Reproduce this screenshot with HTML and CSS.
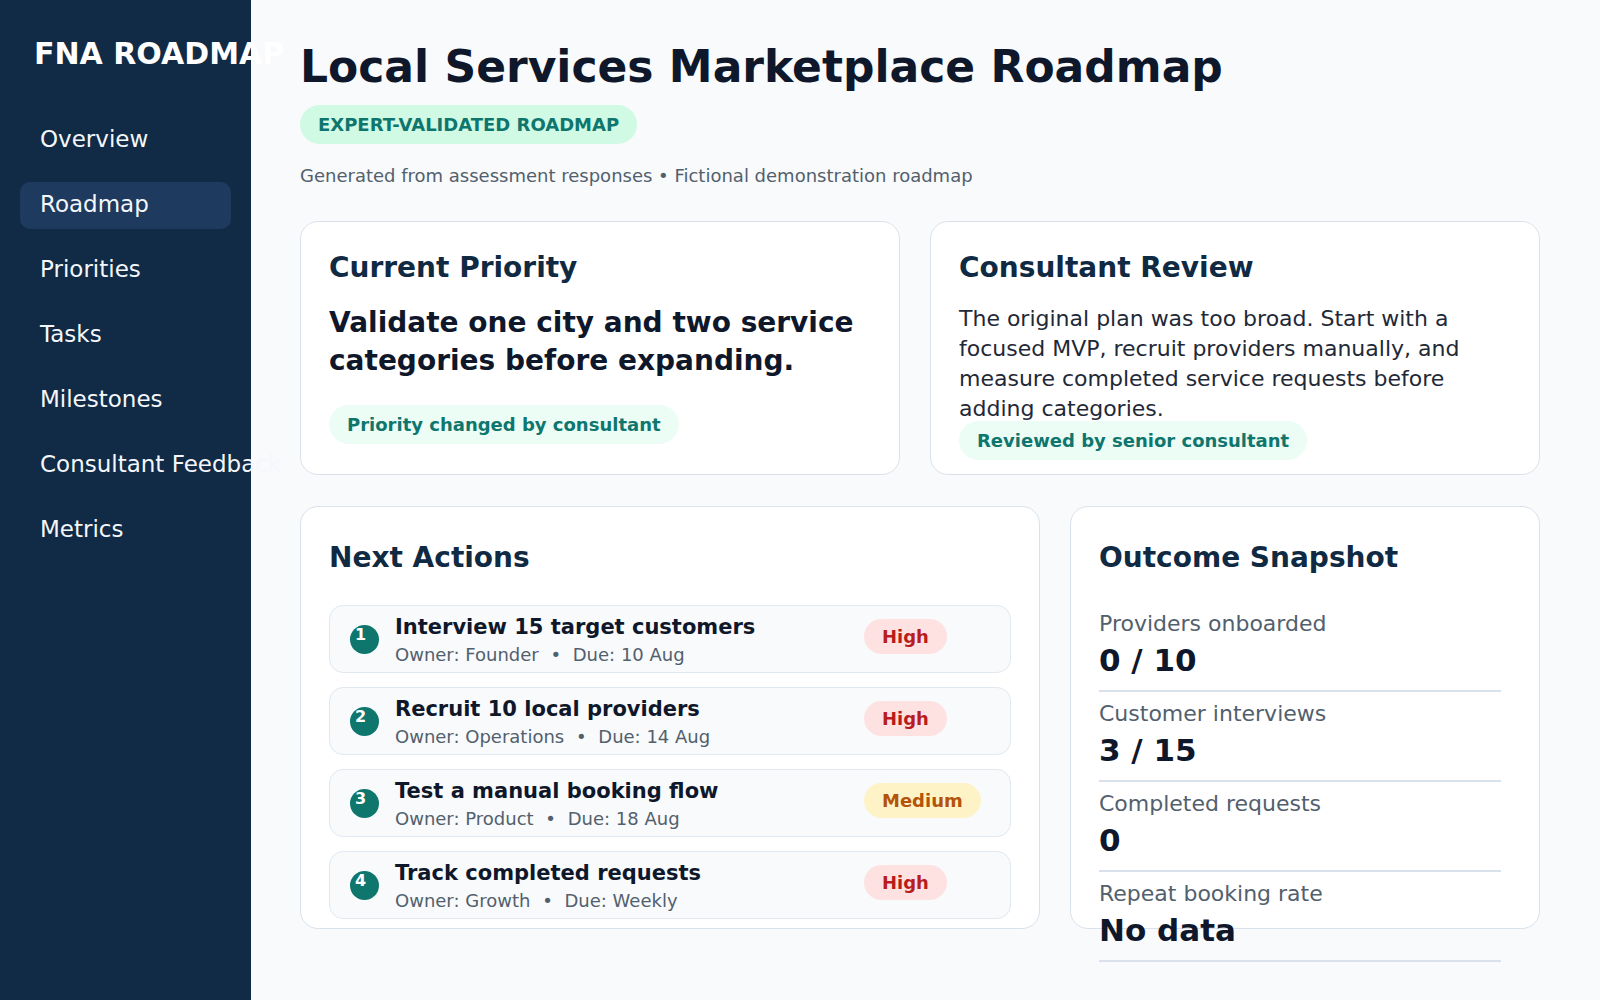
FILE: index.html
```html
<!DOCTYPE html>
<html lang="en">
<head>
    <meta charset="UTF-8">
    <meta name="viewport" content="width=device-width, initial-scale=1.0">
    <title>Roadmap - FNA</title>
    <link rel="stylesheet" href="styles.css">
</head>
<body>
    <!-- Sidebar -->
    <aside class="sidebar">
        <div class="logo">FNA ROADMAP</div>
        <nav class="nav">
            <a href="#overview">Overview</a>
            <a href="#roadmap" class="active">Roadmap</a>
            <a href="#priorities">Priorities</a>
            <a href="#tasks">Tasks</a>
            <a href="#milestones">Milestones</a>
            <a href="#feedback">Consultant Feedback</a>
            <a href="#metrics">Metrics</a>
        </nav>
    </aside>

    <main class="main">
        <!-- Page header -->
        <header class="page-header">
            <h1>Local Services Marketplace Roadmap</h1>
            <span class="status-badge">EXPERT-VALIDATED ROADMAP</span>
            <p class="subtitle">Generated from assessment responses • Fictional demonstration roadmap</p>
        </header>

        <!-- Priority + review -->
        <section class="grid grid-top">
            <div class="card">
                <h2>Current Priority</h2>
                <p class="priority-text">Validate one city and two service categories before expanding.</p>
                <span class="note-pill">Priority changed by consultant</span>
            </div>
            <div class="card">
                <h2>Consultant Review</h2>
                <p class="review-text">The original plan was too broad. Start with a focused MVP, recruit providers manually, and measure completed service requests before adding categories.</p>
                <span class="note-pill">Reviewed by senior consultant</span>
            </div>
        </section>

        <!-- Actions + outcomes -->
        <section class="grid grid-bottom">
            <div class="card card-tall">
                <h2>Next Actions</h2>
                <ul class="action-list">
                    <li class="action-row">
                        <span class="step">1</span>
                        <div class="action-info">
                            <div class="action-title">Interview 15 target customers</div>
                            <div class="action-meta">Owner: Founder <span class="dot">•</span> Due: 10 Aug</div>
                        </div>
                        <span class="priority priority-high">High</span>
                    </li>
                    <li class="action-row">
                        <span class="step">2</span>
                        <div class="action-info">
                            <div class="action-title">Recruit 10 local providers</div>
                            <div class="action-meta">Owner: Operations <span class="dot">•</span> Due: 14 Aug</div>
                        </div>
                        <span class="priority priority-high">High</span>
                    </li>
                    <li class="action-row">
                        <span class="step">3</span>
                        <div class="action-info">
                            <div class="action-title">Test a manual booking flow</div>
                            <div class="action-meta">Owner: Product <span class="dot">•</span> Due: 18 Aug</div>
                        </div>
                        <span class="priority priority-medium">Medium</span>
                    </li>
                    <li class="action-row">
                        <span class="step">4</span>
                        <div class="action-info">
                            <div class="action-title">Track completed requests</div>
                            <div class="action-meta">Owner: Growth <span class="dot">•</span> Due: Weekly</div>
                        </div>
                        <span class="priority priority-high">High</span>
                    </li>
                </ul>
            </div>

            <div class="card card-tall">
                <h2>Outcome Snapshot</h2>
                <ul class="metric-list">
                    <li class="metric">
                        <div class="metric-label">Providers onboarded</div>
                        <div class="metric-value">0 / 10</div>
                    </li>
                    <li class="metric">
                        <div class="metric-label">Customer interviews</div>
                        <div class="metric-value">3 / 15</div>
                    </li>
                    <li class="metric">
                        <div class="metric-label">Completed requests</div>
                        <div class="metric-value">0</div>
                    </li>
                    <li class="metric">
                        <div class="metric-label">Repeat booking rate</div>
                        <div class="metric-value">No data</div>
                    </li>
                </ul>
            </div>
        </section>
    </main>
</body>
</html>
```

FILE: styles.css
```css
/* General Styles */
body {
    margin: 0;
    display: flex;
    min-height: 100vh;
    background-color: #f8fafc;
    font-family: "DejaVu Sans", Verdana, sans-serif;
    color: #0f172a;
}

/* Sidebar */
.sidebar {
    width: 251px;
    flex-shrink: 0;
    box-sizing: border-box;
    padding: 36px 20px;
    background-color: #112a45;
    color: #ffffff;
}

.logo {
    padding-left: 14px;
    margin-bottom: 46px;
    font-size: 30px;
    font-weight: bold;
    white-space: nowrap;
}

.nav a {
    display: block;
    width: 211px;
    box-sizing: border-box;
    padding: 9px 20px 11px;
    margin-bottom: 18px;
    border-radius: 10px;
    color: #f4f7fb;
    text-decoration: none;
    font-size: 23px;
    line-height: 27px;
    white-space: nowrap;
}

.nav a.active {
    background-color: #1f3a5f;
}

/* Main */
.main {
    flex: 1;
    min-width: 0;
    padding: 41px 60px 0 49px;
}

.page-header {
    display: flex;
    flex-direction: column;
    align-items: flex-start;
}

.page-header h1 {
    margin: 0 0 13px;
    font-size: 44px;
    color: #0f172a;
}

.status-badge {
    padding: 9px 18px;
    border-radius: 999px;
    background-color: #d1fae5;
    color: #0f766e;
    font-size: 18px;
    font-weight: bold;
    line-height: 21px;
}

.subtitle {
    margin: 21px 0 35px;
    font-size: 18px;
    color: #52606d;
}

/* Card grids */
.grid {
    display: grid;
    column-gap: 30px;
}

.grid-top {
    grid-template-columns: 600px 610px;
    grid-auto-rows: 254px;
    margin-bottom: 31px;
}

.grid-bottom {
    grid-template-columns: 740px 470px;
    grid-auto-rows: 423px;
}

.card {
    display: flex;
    flex-direction: column;
    box-sizing: border-box;
    padding: 28px 28px 30px;
    background-color: #ffffff;
    border: 1px solid #d9e2ec;
    border-radius: 18px;
}

.card-tall {
    padding-top: 33px;
}

.card h2 {
    margin: 0;
    font-size: 28px;
    line-height: 1.3;
    color: #102a43;
}

.priority-text {
    margin: 18px 0 0;
    font-size: 28px;
    font-weight: bold;
    line-height: 38px;
    color: #0f172a;
}

.review-text {
    margin: 18px 0 -3px;
    font-size: 22px;
    line-height: 30px;
    color: #1f2937;
}

.note-pill {
    margin-top: auto;
    align-self: flex-start;
    padding: 9px 18px;
    border-radius: 999px;
    background-color: #ecfdf5;
    color: #0f766e;
    font-size: 18px;
    font-weight: bold;
    line-height: 21px;
}

/* Next actions */
.action-list {
    list-style: none;
    margin: 29px 0 0;
    padding: 0;
    display: flex;
    flex-direction: column;
    gap: 14px;
}

.action-row {
    display: grid;
    grid-template-columns: 29px 1fr 126px;
    column-gap: 16px;
    align-items: center;
    height: 68px;
    box-sizing: border-box;
    padding: 0 19px 0 20px;
    background-color: #f8fafc;
    border: 1px solid #e2e8f0;
    border-radius: 14px;
}

.step {
    width: 29px;
    height: 29px;
    box-sizing: border-box;
    padding-left: 5px;
    border-radius: 50%;
    background-color: #0f766e;
    color: #ffffff;
    font-size: 16px;
    font-weight: bold;
}

.action-info {
    padding-top: 2px;
}

.action-title {
    font-size: 21px;
    font-weight: bold;
    color: #0f172a;
}

.action-meta {
    margin-top: 5px;
    font-size: 18px;
    color: #52606d;
}

.action-meta .dot {
    margin: 0 6px;
}

.priority {
    justify-self: start;
    margin-bottom: 6px;
    margin-left: -1px;
    padding: 7px 18px;
    border-radius: 999px;
    font-size: 18px;
    font-weight: bold;
}

.priority-high {
    background-color: #fee2e2;
    color: #b91c1c;
}

.priority-medium {
    background-color: #fef3c7;
    color: #b45309;
}

/* Outcome snapshot */
.metric-list {
    list-style: none;
    margin: 26px 10px 0 0;
    padding: 0;
}

.metric {
    padding: 9px 0 12px;
    border-bottom: 2px solid #d9e2ec;
}

.metric-label {
    font-size: 22px;
    color: #52606d;
}

.metric-value {
    margin-top: 6px;
    font-size: 31px;
    font-weight: bold;
    color: #0f172a;
}
```
